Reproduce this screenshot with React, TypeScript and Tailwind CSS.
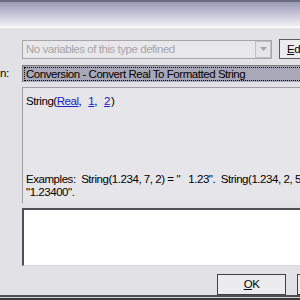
const font = { fontFamily: '"Liberation Sans", Arial, sans-serif' };

function Link({ children }: { children: React.ReactNode }) {
  return <span className="text-[#2020c8] underline">{children}</span>;
}

export default function App() {
  return (
    <div
      className="w-[300px] h-[300px] overflow-hidden bg-[#e2e1e6] flex flex-col text-[11.5px] tracking-[-0.45px] text-black"
      style={font}
    >
      {/* title area */}
      <div className="h-[28px] shrink-0 border-t-2 border-[#6c6c80] bg-gradient-to-b from-[#9b9ab6] to-[#f4f4f8] border-b border-b-white" />

      <div className="grid grid-cols-[22px_1fr] mt-[11px]">
        <div />
        <div className="flex items-center gap-[7px]">
          <div className="w-[250px] h-[19px] flex border border-[#a7a6aa] bg-[#e8e8ea]">
            <div className="flex-1 px-[3px] leading-[17px] text-[#a6a5ab] whitespace-nowrap overflow-hidden">
              No variables of this type defined
            </div>
            <div className="w-[16px] h-[17px] border border-[#c0c0c4] bg-[#e6e6ea] flex items-center justify-center">
              <svg width="7" height="4" viewBox="0 0 7 4">
                <path d="M0 0h7L3.5 4z" fill="#a6a5ab" />
              </svg>
            </div>
          </div>
          <div className="w-[40px] h-[20px] border border-[#5a5a5a] border-r-0 bg-[#ececee] pl-[7px] leading-[18px] whitespace-nowrap overflow-hidden">
            <span className="underline">E</span>dit
          </div>
        </div>

        <div className="mt-[6px] text-right leading-[17px] pr-[16px] whitespace-nowrap">
          n:
        </div>
        <div className="mt-[6px] h-[17px] border-t border-l border-[#7a7a7e] bg-[#a9a8b8] p-px">
          <div className="h-full border border-dotted border-black px-[1px] leading-[13px] whitespace-nowrap overflow-hidden">
            Conversion - Convert Real To Formatted String
          </div>
        </div>

        <div />
        <div className="mt-[5px] h-[116px] border-t border-l border-[#a0a0a4] bg-[#e6e5ea] pl-[3px] pt-[5px] flex flex-col overflow-hidden whitespace-pre">
          <div>
            String(<Link>Real</Link>,<span className="ml-[7px]"><Link>1</Link></span>,<span className="ml-[7px]"><Link>2</Link></span><span className="ml-[1px]">)</span>
          </div>
          <div className="mt-auto mb-[4px] leading-[13px]">
            <div>{'Examples:  String(1.234, 7, 2) = "   1.23".  String(1.234, 2, 5) ='}</div>
            <div>{'"1.23400".'}</div>
          </div>
        </div>

        <div />
        <div className="mt-[5px] h-[58px] border-t-2 border-l-2 border-t-[#505054] border-l-[#505054] border-b border-b-[#d8d8dc] bg-white" />

        <div />
        <div className="mt-[8px] flex gap-[11px] pl-[195px]">
          <div className="w-[69px] h-[21px] border border-[#404040] bg-[#ececee] flex items-center justify-center">
            <span>
              <span className="underline">O</span>K
            </span>
          </div>
          <div className="w-[20px] h-[21px] border border-[#404040] border-r-0 bg-[#ececee]" />
        </div>
      </div>

      <div className="mt-auto h-[5px] shrink-0 border-t-2 border-[#505054] border-b-2 border-b-[#3c3c40] bg-[#d0d0d4]" />
    </div>
  );
}
